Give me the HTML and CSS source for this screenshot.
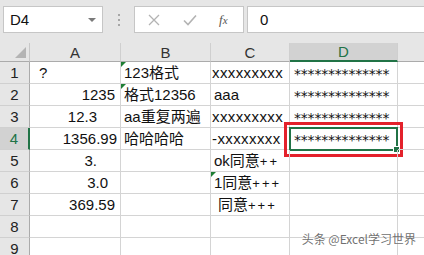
FILE: index.html
```html
<!DOCTYPE html>
<html lang="zh-CN">
<head>
<meta charset="UTF-8">
<title>Excel 自定义格式</title>
<link rel="stylesheet" href="styles.css">
</head>
<body>

<div class="formula-bar">
    <div class="name-box">D4<span class="arrow"></span></div>
    <div class="dots">
        <svg width="4" height="14" viewBox="0 0 4 14"><rect x="1" y="1" width="2" height="2" fill="#a6a6a6"/><rect x="1" y="6" width="2" height="2" fill="#a6a6a6"/><rect x="1" y="11" width="2" height="2" fill="#a6a6a6"/></svg>
    </div>
    <div class="func-box">
        <svg class="btn-x" width="12" height="12" viewBox="0 0 12 12"><path d="M1 1 L11 11 M11 1 L1 11" stroke="#b3b3b3" stroke-width="1.3" fill="none"/></svg>
        <svg class="btn-ok" width="14" height="12" viewBox="0 0 14 12"><path d="M1 6.5 L5 10.5 L13 1.5" stroke="#b3b3b3" stroke-width="1.6" fill="none"/></svg>
        <span class="fx">f<span class="fx-x">x</span></span>
    </div>
    <div class="formula-input">0</div>
</div>

<div class="sheet">
    <div class="corner"></div>
    <div class="col-head">A</div>
    <div class="col-head">B</div>
    <div class="col-head">C</div>
    <div class="col-head active">D</div>
    <div class="col-head last"></div>

    <div class="row-head">1</div>
    <div class="cell pad-q">?</div>
    <div class="cell tri">123格式</div>
    <div class="cell clip">xxxxxxxxx</div>
    <div class="cell stars">**************</div>
    <div class="cell last"></div>

    <div class="row-head">2</div>
    <div class="cell num" style="padding-right: 5px;">1235</div>
    <div class="cell tri">格式12356</div>
    <div class="cell">aaa</div>
    <div class="cell stars">**************</div>
    <div class="cell last"></div>

    <div class="row-head">3</div>
    <div class="cell num" style="padding-right: 23px;">12.3</div>
    <div class="cell">aa重复两遍</div>
    <div class="cell clip">xxxxxxxxx</div>
    <div class="cell stars">**************</div>
    <div class="cell last"></div>

    <div class="row-head active">4</div>
    <div class="cell num" style="padding-right: 3px;">1356.99</div>
    <div class="cell">哈哈哈哈</div>
    <div class="cell clip">-xxxxxxxx</div>
    <div class="cell stars selected">**************<span class="sel-box"><span class="handle"></span></span><span class="mark-box"></span></div>
    <div class="cell last"></div>

    <div class="row-head">5</div>
    <div class="cell num" style="padding-right: 23px;">3.</div>
    <div class="cell"></div>
    <div class="cell plus">ok同意<span class="pl">++</span></div>
    <div class="cell"></div>
    <div class="cell last"></div>

    <div class="row-head">6</div>
    <div class="cell num" style="padding-right: 12px;">3.0</div>
    <div class="cell"></div>
    <div class="cell tri plus">1同意<span class="pl">+++</span></div>
    <div class="cell"></div>
    <div class="cell last"></div>

    <div class="row-head">7</div>
    <div class="cell num" style="padding-right: 5px;">369.59</div>
    <div class="cell"></div>
    <div class="cell plus indent">同意<span class="pl">+++</span></div>
    <div class="cell"></div>
    <div class="cell last"></div>

    <div class="row-head">8</div>
    <div class="cell"></div>
    <div class="cell"></div>
    <div class="cell"></div>
    <div class="cell"></div>
    <div class="cell last"></div>

    <div class="row-head">9</div>
    <div class="cell"></div>
    <div class="cell"></div>
    <div class="cell"></div>
    <div class="cell"></div>
    <div class="cell last"></div>
</div>

<div class="watermark">头条 @Excel学习世界</div>

</body>
</html>
```

FILE: styles.css
```css
body {
    margin: 0;
    width: 424px;
    height: 255px;
    overflow: hidden;
    position: relative;
    background-color: #ffffff;
    font-family: "Liberation Sans", "Noto Sans CJK SC", sans-serif;
    color: #111111;
}

/* formula bar */
.formula-bar {
    display: flex;
    align-items: flex-start;
    height: 43px;
    padding: 6px 0 0 3px;
    box-sizing: border-box;
    background-color: #e6e6e6;
}
.name-box {
    position: relative;
    width: 100px;
    height: 27px;
    box-sizing: border-box;
    border: 1px solid #c6c6c6;
    background-color: #ffffff;
    font-size: 15px;
    line-height: 25px;
    padding-left: 6px;
}
.name-box .arrow {
    position: absolute;
    right: 6px;
    top: 11px;
    border-left: 4px solid transparent;
    border-right: 4px solid transparent;
    border-top: 4px solid #7a7a7a;
}
.dots {
    width: 31px;
    height: 27px;
    display: flex;
    align-items: center;
    justify-content: center;
}
.func-box {
    width: 110px;
    height: 27px;
    box-sizing: border-box;
    border: 1px solid #c6c6c6;
    background-color: #ffffff;
    display: flex;
    align-items: center;
}
.btn-x {
    margin-left: 13px;
}
.btn-ok {
    margin-left: 23px;
}
.fx {
    margin-left: 22px;
    font-family: "Liberation Serif", serif;
    font-style: italic;
    font-size: 13px;
    color: #555555;
}
.fx-x {
    font-size: 11px;
}
.formula-input {
    flex: 1;
    margin-left: 3px;
    height: 27px;
    box-sizing: border-box;
    border: 1px solid #c6c6c6;
    border-right: none;
    background-color: #ffffff;
    font-size: 15px;
    line-height: 25px;
    padding-left: 12px;
}

/* sheet grid */
.sheet {
    display: grid;
    grid-template-columns: 30px 91px 90px 79px 108px 1fr;
    grid-template-rows: 19px repeat(9, 22px);
    background-color: #ffffff;
}
.corner {
    background-color: #e6e6e6;
    border-right: 1px solid #c8c8c8;
    border-bottom: 1px solid #ababab;
    position: relative;
}
.corner::after {
    content: "";
    position: absolute;
    right: 3px;
    bottom: 3px;
    border-left: 11px solid transparent;
    border-bottom: 11px solid #b4b4b4;
}
.col-head {
    background-color: #e6e6e6;
    border-right: 1px solid #cfcfcf;
    border-bottom: 1px solid #ababab;
    text-align: center;
    font-size: 15px;
    line-height: 19px;
    color: #333333;
}
.col-head.active {
    background-color: #d2d2d2;
    color: #217346;
    border-bottom: 2px solid #217346;
    line-height: 18px;
}
.col-head.last,
.cell.last {
    border-right: none;
}
.row-head {
    background-color: #e6e6e6;
    border-right: 1px solid #ababab;
    border-bottom: 1px solid #d0d0d0;
    text-align: center;
    font-size: 15px;
    line-height: 22px;
    color: #222222;
}
.row-head.active {
    background-color: #d2d2d2;
    color: #217346;
    border-right: 2px solid #217346;
}
.cell {
    position: relative;
    border-right: 1px solid #d4d4d4;
    border-bottom: 1px solid #d4d4d4;
    font-size: 15px;
    line-height: 22px;
    padding-left: 3px;
    white-space: nowrap;
    overflow: hidden;
}
.cell.num {
    text-align: right;
    padding-left: 0;
}
.cell.pad-q {
    padding-left: 9px;
}
.cell.indent {
    padding-left: 7px;
}
.cell.clip {
    padding-left: 1px;
    letter-spacing: 0.4px;
}
.cell.stars {
    padding-left: 4px;
    font-family: "DejaVu Sans", sans-serif;
    font-size: 14px;
    letter-spacing: -0.2px;
    line-height: 24px;
}
.cell .pl {
    font-size: 13px;
    letter-spacing: 2px;
}
.cell.tri::before {
    content: "";
    position: absolute;
    left: 0;
    top: 0;
    border-top: 5px solid #1e7e34;
    border-right: 5px solid transparent;
}

/* selection on D4 */
.cell.selected {
    overflow: visible;
}
.sel-box {
    position: absolute;
    left: -1px;
    top: -1px;
    right: -1px;
    bottom: -2px;
    border: 2px solid #217346;
}
.handle {
    position: absolute;
    right: -4px;
    bottom: -4px;
    width: 5px;
    height: 5px;
    background-color: #217346;
    border: 1px solid #ffffff;
}
.mark-box {
    position: absolute;
    left: -6px;
    top: -6px;
    right: -6px;
    bottom: -8px;
    border: 3px solid #e3212b;
}

.watermark {
    position: absolute;
    right: 8px;
    bottom: 8px;
    font-family: "Noto Sans CJK SC", sans-serif;
    font-size: 12px;
    color: rgba(85, 85, 85, 0.85);
    text-shadow: 0 0 1px rgba(255, 255, 255, 0.9);
}
```
